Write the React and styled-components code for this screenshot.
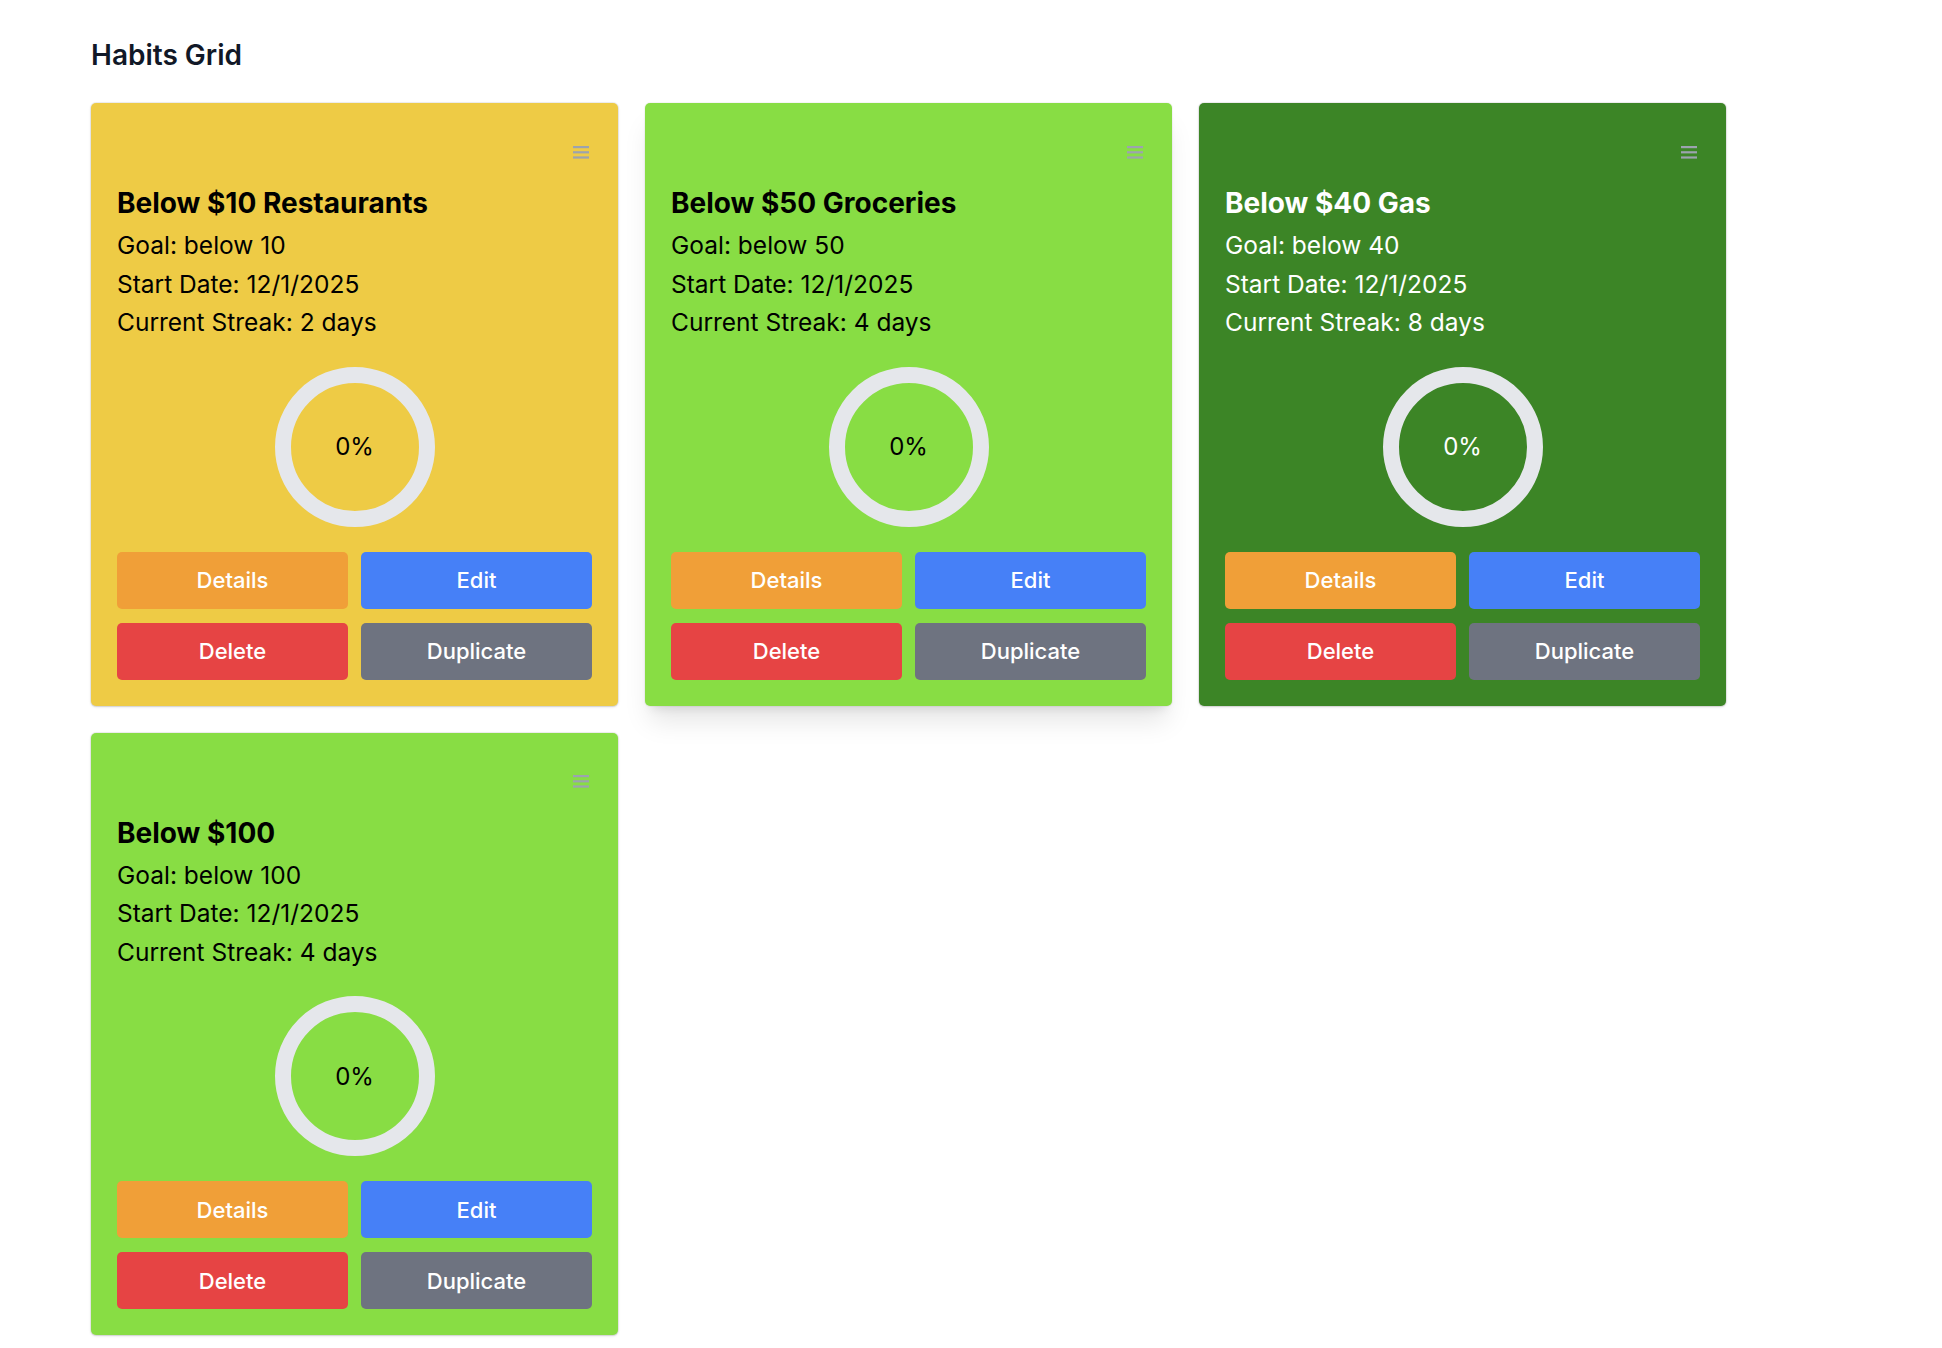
import React from 'react';
import styled, { createGlobalStyle } from 'styled-components';

const habits = [
  { id: 1, name: 'Below $10 Restaurants', goal: 10, start: '12/1/2025', streak: 2, color: '#eecb45', dark: false },
  { id: 2, name: 'Below $50 Groceries', goal: 50, start: '12/1/2025', streak: 4, color: '#88dd44', dark: false, raised: true },
  { id: 3, name: 'Below $40 Gas', goal: 40, start: '12/1/2025', streak: 8, color: '#3c8526', dark: true },
  { id: 4, name: 'Below $100', goal: 100, start: '12/1/2025', streak: 4, color: '#88dd44', dark: false },
];

const buttonColors = {
  details: '#f09f38',
  edit: '#4680f7',
  delete: '#e64444',
  duplicate: '#6e7380',
};

const ProgressRing = ({ percent, dark }) => {
  const r = 72;
  const c = 2 * Math.PI * r;
  return (
    <RingWrap>
      <svg width="160" height="160" viewBox="0 0 160 160">
        <circle cx="80" cy="80" r={r} fill="none" stroke="#e5e7eb" strokeWidth="16" />
        <circle
          cx="80"
          cy="80"
          r={r}
          fill="none"
          stroke="#22c55e"
          strokeWidth="16"
          strokeDasharray={c}
          strokeDashoffset={c - (percent / 100) * c}
          transform="rotate(-90 80 80)"
        />
      </svg>
      <RingLabel $dark={dark}>{percent}%</RingLabel>
    </RingWrap>
  );
};

const MenuIcon = () => (
  <svg width="16" height="13" viewBox="0 0 16 13">
    <rect x="0" y="0" width="16" height="2.2" fill="currentColor" />
    <rect x="0" y="5.2" width="16" height="2.2" fill="currentColor" />
    <rect x="0" y="10.4" width="16" height="2.2" fill="currentColor" />
  </svg>
);

const HabitCard = ({ habit }) => (
  <Card $bg={habit.color} $raised={habit.raised}>
    <CardTop>
      <MenuButton aria-label="menu">
        <MenuIcon />
      </MenuButton>
    </CardTop>
    <CardTitle $dark={habit.dark}>{habit.name}</CardTitle>
    <Info $dark={habit.dark}>Goal: below {habit.goal}</Info>
    <Info $dark={habit.dark}>Start Date: {habit.start}</Info>
    <Info $dark={habit.dark}>Current Streak: {habit.streak} days</Info>
    <ProgressRing percent={0} dark={habit.dark} />
    <Actions>
      <ActionButton $bg={buttonColors.details}>Details</ActionButton>
      <ActionButton $bg={buttonColors.edit}>Edit</ActionButton>
      <ActionButton $bg={buttonColors.delete}>Delete</ActionButton>
      <ActionButton $bg={buttonColors.duplicate}>Duplicate</ActionButton>
    </Actions>
  </Card>
);

export default function App() {
  return (
    <>
      <GlobalStyle />
      <Page>
        <Heading>Habits Grid</Heading>
        <Grid>
          {habits.map(h => <HabitCard key={h.id} habit={h} />)}
        </Grid>
      </Page>
    </>
  );
}

const GlobalStyle = createGlobalStyle`
  * { box-sizing: border-box; }
  body {
    margin: 0;
    background: #ffffff;
    font-family: Inter, "Noto Sans", "Liberation Sans", sans-serif;
  }
`;

const Page = styled.div`
  padding: 37px 91px 40px;
`;

const Heading = styled.h1`
  margin: 0 0 30px;
  font-size: 28px;
  line-height: 36px;
  font-weight: 600;
  color: #111827;
`;

const Grid = styled.div`
  display: grid;
  grid-template-columns: repeat(3, 527px);
  gap: 27px;
`;

const Card = styled.div`
  display: flex;
  flex-direction: column;
  padding: 26px;
  border-radius: 5px;
  background: ${props => props.$bg};
  box-shadow: ${props => props.$raised
    ? '0 0 0 1px rgba(0,0,0,0.04), 0 20px 25px -5px rgba(0,0,0,0.1), 0 8px 10px -6px rgba(0,0,0,0.1)'
    : '0 0 0 1px rgba(0,0,0,0.06), 0 1px 3px 0 rgba(0,0,0,0.12), 0 1px 2px -1px rgba(0,0,0,0.1)'};
`;

const CardTop = styled.div`
  display: flex;
  justify-content: flex-end;
  align-items: center;
  height: 46px;
  margin-bottom: 10px;
`;

const MenuButton = styled.button`
  display: flex;
  align-items: center;
  padding: 0;
  margin-right: 3px;
  border: none;
  background: none;
  color: #9ca3af;
  cursor: pointer;
`;

const CardTitle = styled.h2`
  margin: 0 0 5px;
  font-size: 28px;
  line-height: 36px;
  font-weight: 700;
  color: ${props => props.$dark ? '#ffffff' : '#000000'};
`;

const Info = styled.p`
  margin: 0;
  font-size: 24.5px;
  line-height: 38.5px;
  color: ${props => props.$dark ? '#ffffff' : '#000000'};
`;

const RingWrap = styled.div`
  position: relative;
  align-self: center;
  width: 160px;
  height: 160px;
  margin: 25px 0;

  svg { display: block; }
`;

const RingLabel = styled.span`
  position: absolute;
  inset: 0;
  display: flex;
  align-items: center;
  justify-content: center;
  font-size: 24px;
  color: ${props => props.$dark ? '#ffffff' : '#000000'};
`;

const Actions = styled.div`
  display: grid;
  grid-template-columns: 1fr 1fr;
  column-gap: 13px;
  row-gap: 14px;
`;

const ActionButton = styled.button`
  height: 57px;
  border: none;
  border-radius: 5px;
  background: ${props => props.$bg};
  color: #ffffff;
  font-family: inherit;
  font-size: 22px;
  font-weight: 500;
  cursor: pointer;
`;
